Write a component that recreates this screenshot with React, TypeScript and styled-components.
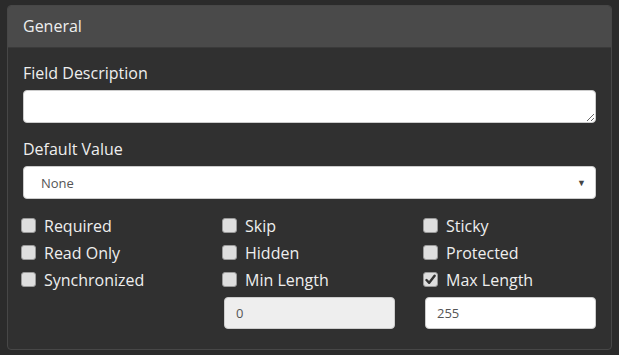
import * as React from 'react'
import styled, { createGlobalStyle } from 'styled-components'

const GlobalStyle = createGlobalStyle`
  html, body {
    margin: 0;
    padding: 0;
    background: #2b2b2b;
    font-family: "Open Sans", "Liberation Sans", sans-serif;
  }
`

interface Option {
  label: string
  checked?: boolean
}

const columns: { options: Option[]; input?: { value: string; disabled?: boolean } }[] = [
  { options: [{ label: 'Required' }, { label: 'Read Only' }, { label: 'Synchronized' }] },
  {
    options: [{ label: 'Skip' }, { label: 'Hidden' }, { label: 'Min Length' }],
    input: { value: '0', disabled: true },
  },
  {
    options: [{ label: 'Sticky' }, { label: 'Protected' }, { label: 'Max Length', checked: true }],
    input: { value: '255' },
  },
]

const Check = ({ checked }: { checked?: boolean }) => (
  <Box>
    {checked && (
      <svg width="11" height="11" viewBox="0 0 11 11">
        <path d="M1.5 6 L4.2 8.8 L9.6 1.8" fill="none" stroke="#333" strokeWidth="2.4" strokeLinecap="round" strokeLinejoin="round" />
      </svg>
    )}
  </Box>
)

export default function App() {
  return (
    <>
      <GlobalStyle />
      <Page>
        <Panel>
          <Header>General</Header>
          <Body>
            <Label>Field Description</Label>
            <TextArea />
            <Label>Default Value</Label>
            <SelectWrap>
              <Select defaultValue="none">
                <option value="none">None</option>
              </Select>
              <Arrow>▼</Arrow>
            </SelectWrap>
            <Grid>
              {columns.map((col, i) => (
                <Column key={i}>
                  {col.options.map((o) => (
                    <CheckRow key={o.label}>
                      <Check checked={o.checked} />
                      <CheckLabel>{o.label}</CheckLabel>
                    </CheckRow>
                  ))}
                  {col.input && (
                    <NumberInput defaultValue={col.input.value} disabled={col.input.disabled} />
                  )}
                </Column>
              ))}
            </Grid>
          </Body>
        </Panel>
      </Page>
    </>
  )
}

const Page = styled.div`
  padding: 5px 0 0 7px;
  width: 619px;
  height: 355px;
  box-sizing: border-box;
`
const Panel = styled.div`
  width: 605px;
  height: 345px;
  box-sizing: border-box;
  border: 1px solid #474747;
  border-radius: 4px;
  background: #303030;
  overflow: hidden;
`
const Header = styled.div`
  height: 42px;
  box-sizing: border-box;
  padding: 0 15px 1px 15px;
  display: flex;
  align-items: center;
  background: #4a4a4a;
  border-bottom: 1px solid #3a3a3a;
  color: #eeeeee;
  font-size: 16px;
`
const Body = styled.div`
  padding: 15px 15px 0 15px;
  display: flex;
  flex-direction: column;
`
const Label = styled.div`
  color: #eeeeee;
  font-size: 16px;
  line-height: 20px;
  margin-bottom: 7px;
`
const TextArea = styled.textarea`
  width: 573px;
  height: 33px;
  box-sizing: border-box;
  border: 1px solid #cccccc;
  border-radius: 4px;
  background: #ffffff;
  resize: vertical;
  margin: 0 0 16px 0;
  display: block;
  outline: none;
`
const SelectWrap = styled.div`
  position: relative;
  width: 573px;
  height: 33px;
`
const Select = styled.select`
  appearance: none;
  width: 100%;
  height: 100%;
  box-sizing: border-box;
  border: 1px solid #cccccc;
  border-radius: 4px;
  background: #ffffff;
  padding: 0 17px;
  font-family: "Open Sans", "Liberation Sans", sans-serif;
  font-size: 13px;
  color: #555555;
  outline: none;
`
const Arrow = styled.span`
  position: absolute;
  right: 10px;
  top: 10px;
  font-size: 9px;
  color: #444444;
  pointer-events: none;
`
const Grid = styled.div`
  display: grid;
  grid-template-columns: repeat(3, 171px);
  column-gap: 30px;
  margin-top: 13px;
`
const Column = styled.div`
  display: flex;
  flex-direction: column;
`
const CheckRow = styled.div`
  height: 27px;
  display: flex;
  align-items: center;
  margin-left: -2px;
`
const Box = styled.span`
  width: 15px;
  height: 15px;
  box-sizing: border-box;
  border: 1px solid #9a9a9a;
  border-radius: 3px;
  background: #dedede;
  display: flex;
  align-items: center;
  justify-content: center;
  flex-shrink: 0;
`
const CheckLabel = styled.span`
  color: #eeeeee;
  font-size: 16px;
  margin-left: 8px;
`
const NumberInput = styled.input`
  margin-top: 4px;
  width: 171px;
  height: 32px;
  box-sizing: border-box;
  border: 1px solid #cccccc;
  border-radius: 4px;
  padding: 0 11px;
  font-family: "Open Sans", "Liberation Sans", sans-serif;
  font-size: 13px;
  color: #555555;
  background: #ffffff;
  outline: none;
  &:disabled {
    background: #eeeeee;
    color: #555555;
  }
`
